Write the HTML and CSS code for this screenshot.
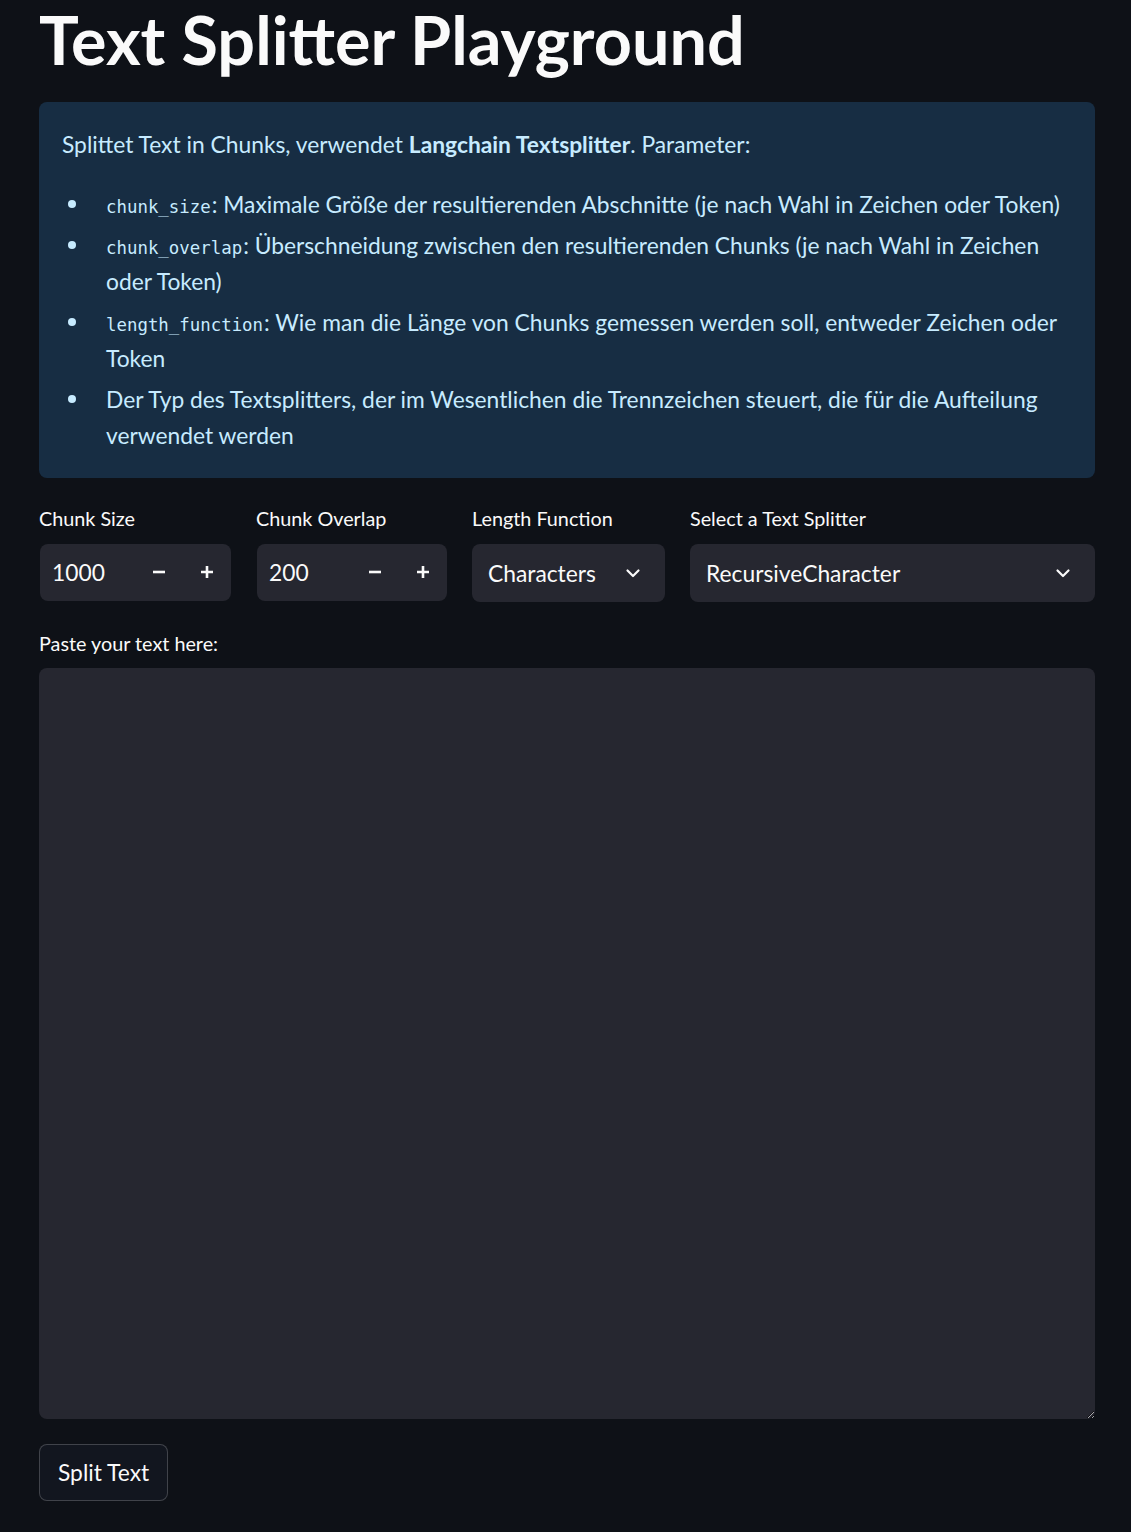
FILE: index.html
```html
<!DOCTYPE html>
<html>
<head>
<meta charset="utf-8">
<link rel="stylesheet" href="styles.css">
</head>
<body>
<main class="main">
  <h1 class="title">Text Splitter Playground</h1>
  <div class="info">
    <p class="info-lead">Splittet Text in Chunks, verwendet <strong>Langchain Textsplitter</strong>. Parameter:</p>
    <ul class="info-list">
      <li><code>chunk_size</code>: Maximale Größe der resultierenden Abschnitte (je nach Wahl in Zeichen oder Token)</li>
      <li><code>chunk_overlap</code>: Überschneidung zwischen den resultierenden Chunks (je nach Wahl in Zeichen oder Token)</li>
      <li><code>length_function</code>: Wie man die Länge von Chunks gemessen werden soll, entweder Zeichen oder Token</li>
      <li>Der Typ des Textsplitters, der im Wesentlichen die Trennzeichen steuert, die für die Aufteilung verwendet werden</li>
    </ul>
  </div>

  <div class="controls">
    <div class="field">
      <label class="label">Chunk Size</label>
      <div class="number">
        <span class="value">1000</span>
        <span class="step">
          <svg width="14" height="14" viewBox="0 0 14 14"><path d="M1 7h12" stroke="#fafafa" stroke-width="2.6"/></svg>
        </span>
        <span class="step">
          <svg width="14" height="14" viewBox="0 0 14 14"><path d="M1 7h12M7 1v12" stroke="#fafafa" stroke-width="2.6"/></svg>
        </span>
      </div>
    </div>
    <div class="field">
      <label class="label">Chunk Overlap</label>
      <div class="number">
        <span class="value">200</span>
        <span class="step">
          <svg width="14" height="14" viewBox="0 0 14 14"><path d="M1 7h12" stroke="#fafafa" stroke-width="2.6"/></svg>
        </span>
        <span class="step">
          <svg width="14" height="14" viewBox="0 0 14 14"><path d="M1 7h12M7 1v12" stroke="#fafafa" stroke-width="2.6"/></svg>
        </span>
      </div>
    </div>
    <div class="field">
      <label class="label">Length Function</label>
      <div class="select">
        <span class="value">Characters</span>
        <svg class="chev" width="16" height="16" viewBox="0 0 16 16"><path d="M2.5 5.5L8 11l5.5-5.5" fill="none" stroke="#fafafa" stroke-width="2.2" stroke-linecap="round" stroke-linejoin="round"/></svg>
      </div>
    </div>
    <div class="field">
      <label class="label">Select a Text Splitter</label>
      <div class="select">
        <span class="value">RecursiveCharacter</span>
        <svg class="chev" width="16" height="16" viewBox="0 0 16 16"><path d="M2.5 5.5L8 11l5.5-5.5" fill="none" stroke="#fafafa" stroke-width="2.2" stroke-linecap="round" stroke-linejoin="round"/></svg>
      </div>
    </div>
  </div>

  <div class="text-field">
    <label class="label label-area">Paste your text here:</label>
    <textarea class="textarea"></textarea>
  </div>

  <button class="button">Split Text</button>
</main>
</body>
</html>
```

FILE: styles.css
```css
html, body {
  margin: 0;
  padding: 0;
  background: #0e1117;
  color: #fafafa;
  font-family: "Lato", "Noto Sans", sans-serif;
}
.main {
  padding: 0 36px 30px 39px;
  display: flex;
  flex-direction: column;
}
.title {
  margin: 0;
  padding: 1px 0 23px;
  font-size: 66.5px;
  line-height: 1.17;
  font-weight: 700;
  letter-spacing: 0;
}
.info {
  background: #172d43;
  color: #c7ebff;
  border-radius: 8px;
  padding: 24px 23px 25px;
  font-size: 22.8px;
  line-height: 36px;
}
.info-lead {
  margin: 0 0 24px;
}
.info-lead strong {
  font-weight: 700;
}
.info-list {
  margin: 0;
  padding-left: 44px;
  list-style: none;
}
.info-list li {
  margin-bottom: 5px;
  position: relative;
}
.info-list li::before {
  content: "";
  position: absolute;
  left: -38px;
  top: 14px;
  width: 8px;
  height: 8px;
  border-radius: 50%;
  background: #c7ebff;
}
.info-list li:last-child {
  margin-bottom: 0;
}
.info-list code {
  font-family: "DejaVu Sans Mono", "Liberation Mono", monospace;
  font-size: 17.4px;
  line-height: 1;
  color: #c7ebff;
  padding-right: 1px;
}
.controls {
  display: grid;
  grid-template-columns: 192px 191px 193px 1fr;
  column-gap: 25px;
  margin-top: 26px;
}
.field {
  display: flex;
  flex-direction: column;
}
.label {
  font-size: 19.8px;
  line-height: 28px;
  margin-bottom: 12px;
  color: #fafafa;
}
.label-area {
  margin-bottom: 11px;
}
.number, .select {
  background: #262730;
  border-radius: 8px;
  height: 57px;
  display: flex;
  align-items: center;
  font-size: 22.8px;
}
.number {
  padding-left: 12px;
  margin-left: 1px;
}
.number .value {
  flex: 1;
}
.step {
  width: 48px;
  height: 100%;
  display: flex;
  align-items: center;
  justify-content: center;
}
.select {
  padding: 0 24px 0 16px;
  height: 58px;
}
.select .value {
  flex: 1;
}
.text-field {
  margin-top: 27px;
  display: flex;
  flex-direction: column;
}
.textarea {
  background: #262730;
  border: none;
  border-radius: 8px;
  height: 751px;
  resize: vertical;
  color: #fafafa;
  font-family: inherit;
  font-size: 22px;
  padding: 16px;
  box-sizing: border-box;
  color-scheme: dark;
  margin-top: 0;
}
.button {
  align-self: flex-start;
  margin-top: 25px;
  background: #12161f;
  border: 1px solid rgba(250, 250, 250, 0.2);
  border-radius: 8px;
  color: #fafafa;
  font-family: inherit;
  font-size: 22.8px;
  height: 57px;
  padding: 0 18px;
}
```
